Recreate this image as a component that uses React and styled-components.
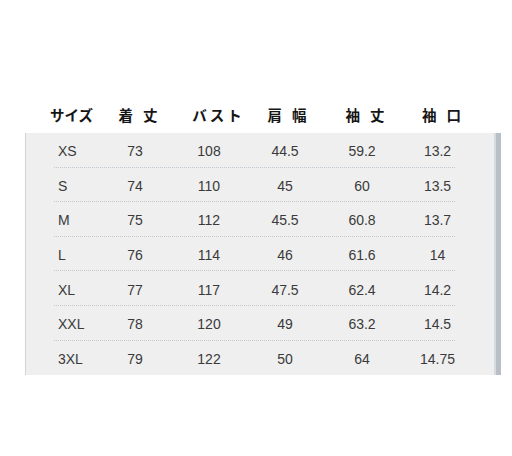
import React from "react";
import styled, { createGlobalStyle } from "styled-components";

const GlobalStyle = createGlobalStyle`
  html, body {
    margin: 0;
    padding: 0;
    background: #ffffff;
  }
  body {
    font-family: "Liberation Sans", Arial, sans-serif;
  }
`;

const Page = styled.div`
  width: 512px;
  height: 456px;
  padding-top: 105px;
  box-sizing: border-box;
  background: #ffffff;
`;

const HeaderRow = styled.div`
  display: grid;
  grid-template-columns: 48px 80px 78px 62px 94px 58px;
  margin-left: 50px;
  height: 20px;
  align-items: center;
  margin-bottom: 8px;
`;

const HeaderCell = styled.div`
  font-family: "Noto Sans CJK JP", "Noto Sans CJK SC", sans-serif;
  font-weight: 700;
  font-size: 14.5px;
  line-height: 20px;
  color: #151515;
  white-space: nowrap;
  text-align: ${(p) => (p.left ? "left" : "center")};
  letter-spacing: ${(p) => p.spacing || 0}px;
  padding-left: ${(p) => (p.left ? 0 : p.spacing || 0)}px;
`;

const Panel = styled.div`
  margin-left: 25px;
  width: 476px;
  box-sizing: border-box;
  background: #efefef;
  border-left: 1px solid #cfd4d9;
  border-right: 5px solid #b8bfc6;
  box-shadow: inset -2px 0 0 #d6dbe0;
  padding: 0 0 0 28px;
`;

const Row = styled.div`
  position: relative;
  display: grid;
  grid-template-columns: 44px 74px 74px 78px 76px 55px;
  height: 34.6px;
  align-items: center;
  font-size: 14px;
  color: #3a3a3a;

  &::after {
    content: "";
    display: ${(p) => (p.last ? "none" : "block")};
    position: absolute;
    left: 0;
    width: 401px;
    bottom: 0;
    border-bottom: 1px dotted #bfc7ce;
  }
`;

const Cell = styled.div`
  text-align: ${(p) => (p.left ? "left" : "center")};
  padding-left: ${(p) => (p.left ? 4 : p.shift || 0)}px;
  padding-top: 2px;
`;

const headers = [
  { label: "サイズ", spacing: 0, left: true },
  { label: "着丈", spacing: 10 },
  { label: "バスト", spacing: 3 },
  { label: "肩幅", spacing: 10 },
  { label: "袖丈", spacing: 10 },
  { label: "袖口", spacing: 10 },
];

const rows = [
  ["XS", "73", "108", "44.5", "59.2", "13.2"],
  ["S", "74", "110", "45", "60", "13.5"],
  ["M", "75", "112", "45.5", "60.8", "13.7"],
  ["L", "76", "114", "46", "61.6", "14"],
  ["XL", "77", "117", "47.5", "62.4", "14.2"],
  ["XXL", "78", "120", "49", "63.2", "14.5"],
  ["3XL", "79", "122", "50", "64", "14.75"],
];

export default function App() {
  return (
    <>
      <GlobalStyle />
      <Page>
        <HeaderRow>
          {headers.map((h) => (
            <HeaderCell key={h.label} left={h.left} spacing={h.spacing}>
              {h.label}
            </HeaderCell>
          ))}
        </HeaderRow>
        <Panel>
          {rows.map((r, i) => (
            <Row key={r[0]} last={i === rows.length - 1}>
              {r.map((v, j) => (
                <Cell key={j} left={j === 0} shift={j === 5 ? 20 : 0}>
                  {v}
                </Cell>
              ))}
            </Row>
          ))}
        </Panel>
      </Page>
    </>
  );
}
